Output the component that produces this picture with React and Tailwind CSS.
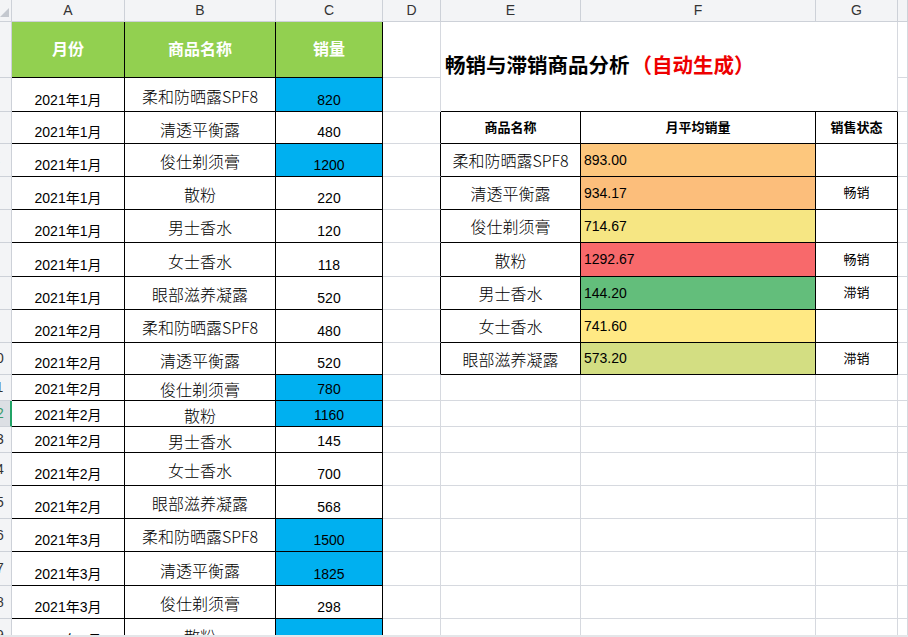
import React from "react";

const sales = [
  ["2021年1月", "柔和防晒露SPF8", "820", true],
  ["2021年1月", "清透平衡露", "480", false],
  ["2021年1月", "俊仕剃须膏", "1200", true],
  ["2021年1月", "散粉", "220", false],
  ["2021年1月", "男士香水", "120", false],
  ["2021年1月", "女士香水", "118", false],
  ["2021年1月", "眼部滋养凝露", "520", false],
  ["2021年2月", "柔和防晒露SPF8", "480", false],
  ["2021年2月", "清透平衡露", "520", false],
  ["2021年2月", "俊仕剃须膏", "780", true],
  ["2021年2月", "散粉", "1160", true],
  ["2021年2月", "男士香水", "145", false],
  ["2021年2月", "女士香水", "700", false],
  ["2021年2月", "眼部滋养凝露", "568", false],
  ["2021年3月", "柔和防晒露SPF8", "1500", true],
  ["2021年3月", "清透平衡露", "1825", true],
  ["2021年3月", "俊仕剃须膏", "298", false],
  ["2021年3月", "散粉", "1320", true],
];

// colour scale already resolved per row
const summary = [
  ["柔和防晒露SPF8", "893.00", "bg-[#fdc77d]", ""],
  ["清透平衡露", "934.17", "bg-[#fcbe7b]", "畅销"],
  ["俊仕剃须膏", "714.67", "bg-[#f6e683]", ""],
  ["散粉", "1292.67", "bg-[#f8696b]", "畅销"],
  ["男士香水", "144.20", "bg-[#63be7b]", "滞销"],
  ["女士香水", "741.60", "bg-[#ffe984]", ""],
  ["眼部滋养凝露", "573.20", "bg-[#d3de82]", "滞销"],
];

const grid = "border-r border-b border-[#d6d9df]";
const black = "border-r border-b border-black";

function RowNum({ n, selected }) {
  return (
    <div
      className={
        selected
          ? "border-b border-[#cdd1d8] border-r-2 border-r-[#21a366] bg-[#dcdfe4] overflow-hidden flex items-center"
          : "border-r border-b border-[#cdd1d8] bg-[#f3f4f6] overflow-hidden flex items-center"
      }
    >
      <div
        className={
          selected
            ? "w-[30px] shrink-0 -ml-[19px] text-center text-[14px] text-[#3a9a6a]"
            : "w-[30px] shrink-0 -ml-[19px] text-center text-[14px] text-[#333]"
        }
      >
        {n}
      </div>
    </div>
  );
}

function ColHead({ label }) {
  return (
    <div className="border-r border-b border-[#cdd1d8] bg-[#f3f4f6] flex items-center justify-center text-[14px] text-[#333]">
      {label}
    </div>
  );
}

export default function App() {
  const cells = [];

  // column letters
  cells.push(
    <div key="corner" className="border-r border-b border-[#cdd1d8] bg-[#f3f4f6] flex items-end justify-start">
      <svg width="10" height="10" viewBox="0 0 10 10" className="mb-[3px]">
        <polygon points="9,0 9,9 0,9" fill="#c4c8cf" />
      </svg>
    </div>
  );
  ["A", "B", "C", "D", "E", "F", "G", ""].forEach((l, i) =>
    cells.push(<ColHead key={"h" + i} label={l} />)
  );

  // row 1: headers + title
  cells.push(<RowNum key="r1" n={1} />);
  ["月份", "商品名称", "销量"].forEach((t) =>
    cells.push(
      <div key={"g" + t} className={black + " bg-[#92d050] flex items-center justify-center text-white font-bold text-[16px]"}>
        {t}
      </div>
    )
  );
  cells.push(<div key="r1d" className={grid} />);
  cells.push(
    <div key="title" className="col-span-3 row-span-2 border-r border-r-[#d6d9df] border-b border-b-black flex items-center pl-[4px] text-[20.5px] font-bold text-black whitespace-nowrap">
      畅销与滞销商品分析<span className="text-[#ee0000] ml-[2px]">（自动生成）</span>
    </div>
  );
  cells.push(<div key="r1h" className={grid} />);

  sales.forEach((s, i) => {
    const r = i + 2;
    cells.push(<RowNum key={"rn" + r} n={r} selected={r === 12} />);
    cells.push(
      <div key={"a" + r} className={black + " flex items-end justify-center pb-[3px] text-[14px] leading-[16px]"}>
        {s[0]}
      </div>
    );
    cells.push(
      <div key={"b" + r} className={black + " flex items-center justify-center pt-[2px] text-[16px] font-light font-['Noto_Sans_CJK_SC',sans-serif]"}>
        {s[1]}
      </div>
    );
    cells.push(
      <div key={"c" + r} className={black + (s[3] ? " bg-[#00b0f0]" : "") + " flex items-end justify-center pb-[3px] text-[14px] leading-[16px]"}>
        {s[2]}
      </div>
    );

    if (r === 2) {
      cells.push(<div key={"d" + r} className={grid} />);
      cells.push(<div key={"hh" + r} className={grid} />);
      return;
    }

    const inTable = r >= 3 && r <= 10;
    cells.push(
      <div key={"d" + r} className={inTable ? "border-b border-b-[#d6d9df] border-r border-r-black" : grid} />
    );

    if (r === 3) {
      ["商品名称", "月平均销量", "销售状态"].forEach((t) =>
        cells.push(
          <div key={"th" + t} className={black + " flex items-center justify-center font-bold text-[13px]"}>
            {t}
          </div>
        )
      );
    } else if (inTable) {
      const row = summary[r - 4];
      cells.push(
        <div key={"e" + r} className={black + " flex items-center justify-center text-[16px] font-light font-['Noto_Sans_CJK_SC',sans-serif]"}>
          {row[0]}
        </div>
      );
      cells.push(
        <div key={"f" + r} className={black + " " + row[2] + " flex items-center pl-[3px] text-[14px]"}>
          {row[1]}
        </div>
      );
      cells.push(
        <div key={"s" + r} className={black + " flex items-center justify-center text-[13px]"}>
          {row[3]}
        </div>
      );
    } else {
      cells.push(<div key={"e" + r} className={grid} />);
      cells.push(<div key={"f" + r} className={grid} />);
      cells.push(<div key={"s" + r} className={grid} />);
    }
    cells.push(<div key={"hh" + r} className={grid} />);
  });

  return (
    <div className="w-[908px] h-[637px] overflow-hidden bg-white text-black font-['Liberation_Sans','Noto_Sans_CJK_SC',sans-serif]">
      <div className="h-[635px] overflow-hidden">
        <div className="grid grid-cols-[12px_113px_151px_107px_58px_140px_235px_82px_1fr] grid-rows-[22px_56px_34px_32px_33px_33px_33px_34px_33px_33px_32px_26px_26px_26px_33px_33px_33px_34px_33px_33px]">
          {cells}
        </div>
      </div>
      <div className="h-[2px] bg-[#e4e6e9]" />
    </div>
  );
}
